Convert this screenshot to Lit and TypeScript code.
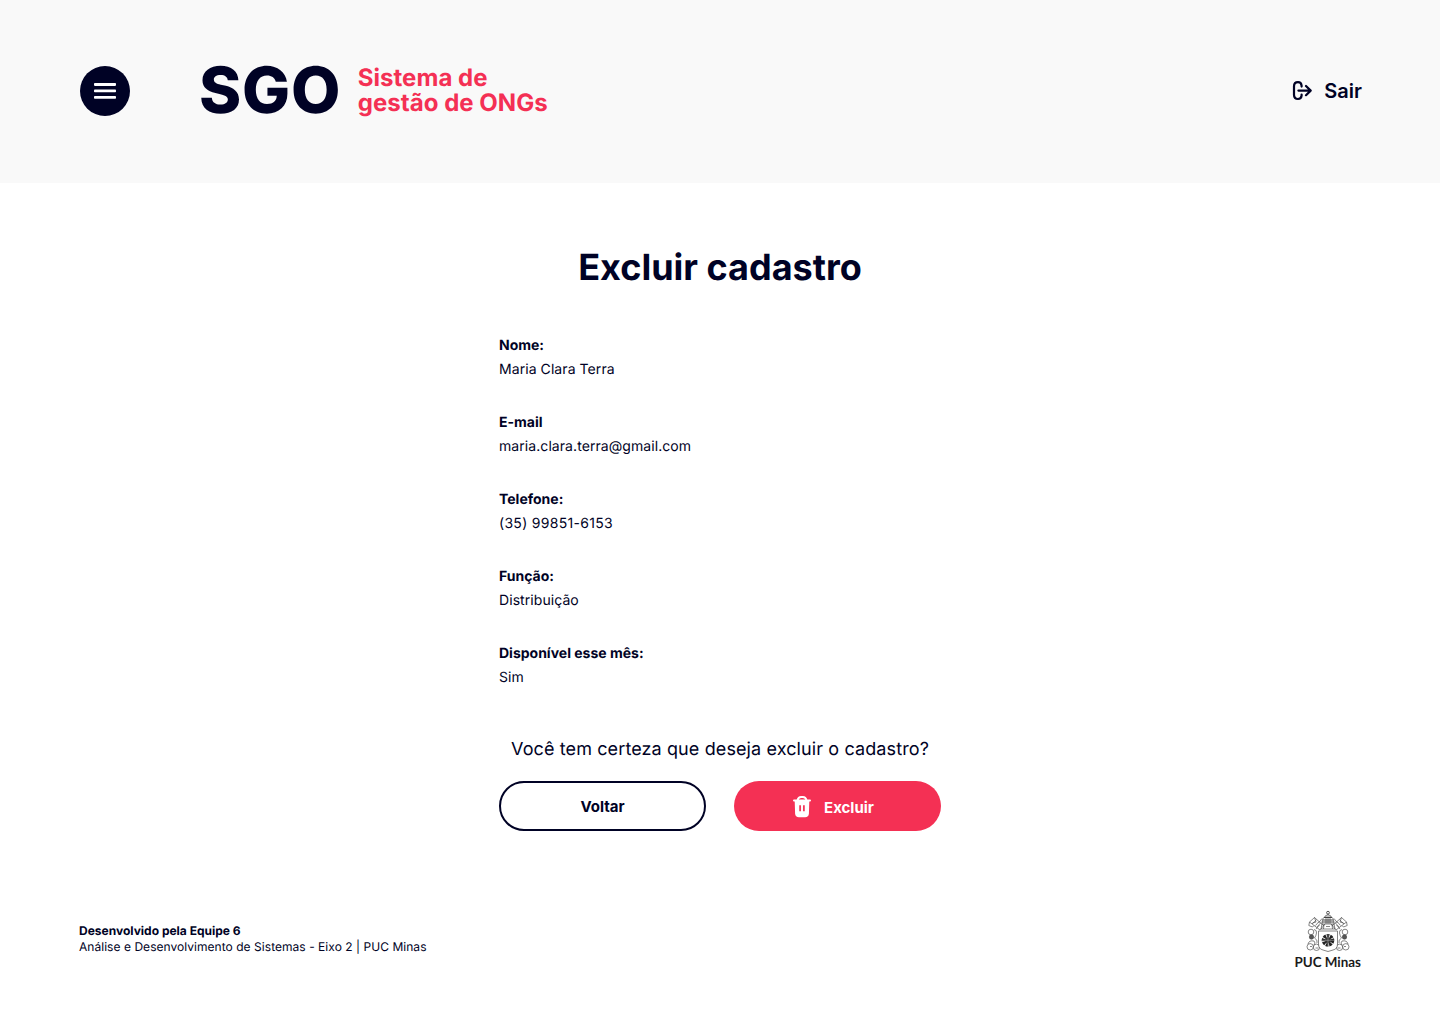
import { LitElement, html, css, svg } from "lit";
import { customElement } from "lit/decorators.js";

const fields: [string, string][] = [
  ["Nome:", "Maria Clara Terra"],
  ["E-mail", "maria.clara.terra@gmail.com"],
  ["Telefone:", "(35) 99851-6153"],
  ["Função:", "Distribuição"],
  ["Disponível esse mês:", "Sim"],
];

/* Left half of the crest's ornaments; mirrored for the right half. */
const crestSide = () => svg`
  <path d="M14 20 L3.5 12 L8.5 7.5 L18 16 M6 14 L10.5 9.8 M3.5 12 L2.8 15.5 L6.5 17 L8 15.5 M8.5 7.5 L10 12 L6.5 13"/>
  <path d="M12.5 13 L16 8.5 M10 19 L13.5 15 M14 20 L19 14 M11 17 L15 12.5 M9.5 15.5 L13 11.5"/>
  <circle cx="5" cy="22" r="2.8"/>
  <circle cx="5.5" cy="27" r="2.2" fill="#555"/>
  <path d="M8 19.5 Q11 20 10.5 23 Q10 26 8.5 28 Q12 30 11 33"/>
  <circle cx="4.2" cy="36.8" r="3.2"/>
  <circle cx="10.5" cy="37.3" r="3.2"/>
  <path d="M2 34 Q3 30 8 31 Q10 33 8 35 M4 36.5 h2 M9.5 38 h3"/>
`;

@customElement("app-root")
export class AppRoot extends LitElement {
  static styles = css`
    :host {
      display: block;
      height: 1024px;
      background: #fff;
      color: #000225;
      font-family: Inter, sans-serif;
      text-rendering: geometricPrecision;
    }
    * { box-sizing: border-box; }
    h1, p, dl, dd, dt { margin: 0; }
    svg { display: block; flex: none; }
    button { font-family: inherit; color: inherit; padding: 0; border: 0; background: none; }
    header {
      height: 183px;
      padding: 0 78px 1px 80px;
      background: #f9f9f9;
      display: flex;
      align-items: center;
    }
    .menu {
      width: 50px;
      height: 50px;
      border-radius: 50%;
      background: #000225;
      display: grid;
      place-items: center;
    }
    .brand { display: flex; align-items: center; margin-left: 69px; padding-bottom: 2px; }
    .sgo { font-size: 64px; font-weight: 800; line-height: 77px; letter-spacing: 0.8px; }
    .tagline {
      margin-left: 16.5px;
      font-size: 24px;
      font-weight: 700;
      line-height: 25px;
      color: #f43054;
      white-space: nowrap;
      letter-spacing: 0.03px;
    }
    .exit {
      margin-left: auto;
      display: flex;
      align-items: center;
      gap: 12px;
      font-size: 20px;
      font-weight: 600;
      line-height: 24px;
    }
    main { width: 442px; margin: 0 auto; padding-top: 62px; }
    h1 { font-size: 36px; line-height: 44px; font-weight: 700; text-align: center; }
    .fields { padding-top: 45px; display: flex; flex-direction: column; gap: 29px; }
    .field { font-size: 14px; line-height: 24px; }
    dd { letter-spacing: 0.07px; }
    dd.numeric { letter-spacing: 0.3px; }
    dt { font-weight: 700; }
    .question { margin-top: 49px; font-size: 18px; line-height: 22px; text-align: center; white-space: nowrap; letter-spacing: 0.11px; }
    .actions { display: grid; grid-template-columns: 1fr 1fr; gap: 28px; margin-top: 20px; }
    .btn {
      height: 50px;
      border-radius: 25px;
      font-size: 15px;
      font-weight: 700;
      display: flex;
      align-items: center;
      justify-content: center;
    }
    .back { border: 2px solid #000225; }
    .delete { background: #f43054; color: #fff; gap: 13px; padding-right: 8px; }
    .delete svg { margin-top: 1px; }
    .delete span { padding-top: 3px; }
    footer {
      display: flex;
      justify-content: space-between;
      padding: 79px 78px 0 79px;
      font-size: 12px;
      line-height: 16px;
    }
    .credits { padding-top: 13px; letter-spacing: 0.04px; }
    .credits strong { display: block; font-weight: 700; letter-spacing: 0; }
    .crest { fill: none; stroke: #444; stroke-width: 0.65; overflow: visible; }
    .puc { font-family: Lato, sans-serif; font-size: 14px; font-weight: 700; fill: #1b1b1b; stroke: none; }
  `;

  render() {
    return html`
      <header>
        <button class="menu" aria-label="Menu">
          <svg width="22" height="16" viewBox="0 0 22 16" fill="#fff">
            <rect y="0.1" width="22" height="2.8" rx="0.8" />
            <rect y="6.6" width="22" height="2.7" rx="0.8" />
            <rect y="13" width="22" height="2.8" rx="0.8" />
          </svg>
        </button>
        <div class="brand">
          <div class="sgo">SGO</div>
          <div class="tagline">Sistema de<br />gestão de ONGs</div>
        </div>
        <button class="exit">
          <svg width="20" height="20" viewBox="0 0 20 20" fill="none" stroke="#000225" stroke-width="2.2" stroke-linecap="round" stroke-linejoin="round">
            <path d="M9.6 5.6 V4.6 Q9.2 1.2 6 1.2 Q2 1.2 2 5.4 V13.8 Q2 18 6 18 Q9.2 18 9.6 14.6 V13.6" />
            <path d="M6.4 9.6 H18.5 M14 5 L18.7 9.6 L14 14.2" />
          </svg>
          Sair
        </button>
      </header>
      <main>
        <h1>Excluir cadastro</h1>
        <dl class="fields">
          ${fields.map(([k, v]) => html`<div class="field"><dt>${k}</dt><dd class=${/^\(\d/.test(v) ? "numeric" : ""}>${v}</dd></div>`)}
        </dl>
        <p class="question">Você tem certeza que deseja excluir o cadastro?</p>
        <div class="actions">
          <button class="btn back">Voltar</button>
          <button class="btn delete">
            <svg width="18" height="22" viewBox="0 0 18 22">
              <path d="M4.4 4.4 Q5.3 1 8 1 H10 Q12.7 1 13.6 4.4" fill="none" stroke="#fff" stroke-width="1.8" />
              <rect x="0" y="3.6" width="18" height="2" rx="1" fill="#fff" />
              <path d="M1.7 5 H16.3 L15.9 17.5 Q15.7 21.3 12 21.3 H6 Q2.3 21.3 2.1 17.5 Z" fill="#fff" />
              <path d="M7.1 9.3 V15.2 M10.9 9.3 V15.2" stroke="#f43054" stroke-width="1.7" />
            </svg>
            <span>Excluir</span>
          </button>
        </div>
      </main>
      <footer>
        <div class="credits">
          <strong>Desenvolvido pela Equipe 6</strong>
          Análise e Desenvolvimento de Sistemas - Eixo 2 | PUC Minas
        </div>
        <svg class="crest" width="68" height="62" viewBox="0 0 68 62">
          <g transform="translate(12 0)">
            <g>${crestSide()}</g>
            <g transform="translate(44 0) scale(-1 1)">${crestSide()}</g>
            <circle cx="22" cy="2.7" r="1.4" fill="#fff" stroke-width="0.9" />
            <path d="M16 14 Q15.5 7.5 22 4.3 Q28.5 7.5 28 14 Z" fill="#fff" />
            <path d="M18 7.5 H26 M16.5 10 H27.5 M16 12 H28" stroke-width="1.1" />
            <path d="M20 5.5 V14 M22 4.3 V14 M24 5.5 V14" />
            <path d="M16 14 L15 19 H29 L28 14 M18 14 L17.5 19 M26 14 L26.5 19 M20 16.5 H24" />
            <path d="M12.5 21 H31.5 V34 Q31.5 39 27 40 L22 41.5 L17 40 Q12.5 39 12.5 34 Z" fill="#fff" />
            <circle cx="22" cy="30.3" r="4.3" stroke="#222" stroke-width="4" stroke-dasharray="2.4 0.7" />
            <circle cx="22" cy="30.3" r="2.9" fill="#333" stroke="none" />
            <path d="M22 24.3 V36.3 M16 30.3 H28" stroke="#aaa" stroke-width="0.6" />
          </g>
          <text class="puc" x="0.4" y="56.5" textLength="66.6" lengthAdjust="spacingAndGlyphs">PUC Minas</text>
        </svg>
      </footer>
    `;
  }
}
